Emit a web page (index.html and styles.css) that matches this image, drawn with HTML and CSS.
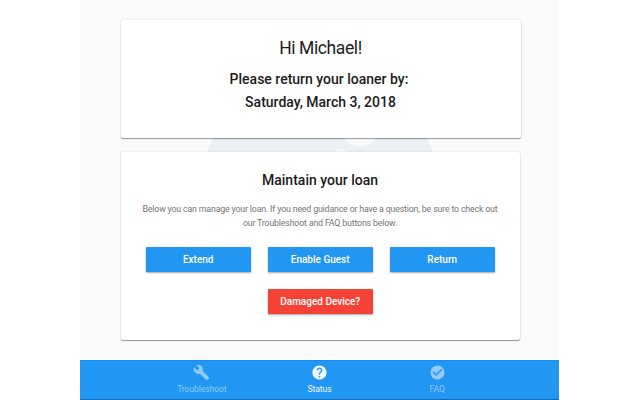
FILE: index.html
```html
<!DOCTYPE html>
<html lang="en">
<head>
<meta charset="utf-8">
<title>Loaner</title>
<link rel="stylesheet" href="styles.css">
</head>
<body>
<div class="app">
  <main class="content">
    <svg class="backdrop" width="240" height="240" viewBox="0 0 240 240">
      <circle cx="120" cy="120" r="119" fill="#eceff4"/>
      <circle cx="160" cy="56" r="20" fill="#fafafa"/>
      <circle cx="140.500" cy="87" r="8" fill="#fafafa"/>
    </svg>
    <section class="card greeting">
      <h1>Hi Michael!</h1>
      <p class="due">Please return your loaner by:</p>
      <p class="due date">Saturday, March 3, 2018</p>
    </section>
    <section class="card manage">
      <h2>Maintain your loan</h2>
      <p class="help">Below you can manage your loan. If you need guidance or have a question, be sure to check out<br>our Troubleshoot and FAQ buttons below.</p>
      <div class="actions">
        <button class="btn">Extend</button>
        <button class="btn">Enable Guest</button>
        <button class="btn">Return</button>
        <button class="btn damaged">Damaged Device?</button>
      </div>
    </section>
  </main>
  <nav class="nav">
    <a class="tab">
      <svg viewBox="0 0 24 24"><path d="M22.700 19l-9.100-9.100c.9-2.300.4-5-1.500-6.900-2-2-5-2.400-7.400-1.300L9 6 6 9 1.600 4.700C.4 7.100.9 10.100 2.900 12.100c1.900 1.900 4.600 2.400 6.900 1.500l9.100 9.100c.4.4 1 .4 1.400 0l2.300-2.300c.5-.4.5-1.100.1-1.400z"/></svg>
      <span>Troubleshoot</span>
    </a>
    <a class="tab active">
      <svg viewBox="0 0 24 24"><path d="M12 2C6.480 2 2 6.480 2 12s4.480 10 10 10 10-4.480 10-10S17.520 2 12 2zm1 17h-2v-2h2v2zm2.070-7.750l-.9.920C13.450 12.900 13 13.500 13 15h-2v-.5c0-1.100.45-2.100 1.170-2.830l1.240-1.260c.37-.36.59-.86.59-1.410 0-1.100-.9-2-2-2s-2 .9-2 2H8c0-2.210 1.790-4 4-4s4 1.790 4 4c0 .88-.36 1.680-.93 2.250z"/></svg>
      <span>Status</span>
    </a>
    <a class="tab">
      <svg viewBox="0 0 24 24"><path d="M12 2C6.480 2 2 6.480 2 12s4.480 10 10 10 10-4.480 10-10S17.520 2 12 2zm-2 15l-5-5 1.410-1.410L10 14.170l7.590-7.590L19 8l-9 9z"/></svg>
      <span>FAQ</span>
    </a>
  </nav>
</div>
</body>
</html>
```

FILE: styles.css
```css
* { box-sizing: border-box; }
body {
  margin: 0;
  background: #fff;
  font-family: Roboto, "Liberation Sans", sans-serif;
  color: #1c1c1c;
}
h1, h2, p { margin: 0; white-space: nowrap; }
.app {
  width: 479px;
  height: 400px;
  margin-left: 80px;
  display: flex;
  flex-direction: column;
  background: #fafafa;
  overflow: hidden;
}
.content {
  position: relative;
  height: 360px;
  padding: 20px 38px 0 41px;
  display: flex;
  flex-direction: column;
  gap: 14px;
}
.backdrop {
  position: absolute;
  left: 120px;
  top: 70px;
}
.card {
  position: relative;
  background: #fff;
  border-radius: 2px;
  text-align: center;
  box-shadow: 0 1px 1px rgba(0, 0, 0, .38), 0 0 2px rgba(0, 0, 0, .16);
}
.greeting { height: 118px; padding-top: 17px; }
.manage { width: 399px; height: 188px; padding-top: 18px; }
h1 {
  font-size: 17.500px;
  font-weight: 400;
  line-height: 22px;
  letter-spacing: -.4px;
  padding-right: 1px;
}
.due {
  font-size: 14px;
  font-weight: 500;
  line-height: 22px;
  padding-right: 4px;
}
.due:not(.date) { margin-top: 9px; }
.date { padding-right: 1px; line-height: 24px; }
h2 {
  font-size: 14px;
  font-weight: 500;
  line-height: 20px;
  padding-right: 1px;
}
.help {
  margin-top: 12px;
  padding-right: 1px;
  font-size: 8.800px;
  letter-spacing: -.17px;
  line-height: 14px;
  color: #757575;
}
.actions {
  margin-top: 17px;
  padding-left: 24.700px;
  display: grid;
  grid-template-columns: repeat(3, 105px);
  gap: 17px;
}
.btn {
  height: 25px;
  padding: 0;
  border: 0;
  border-radius: 1px;
  background: #2196f3;
  color: #fff;
  font: 500 10px/25px Roboto, "Liberation Sans", sans-serif;
  box-shadow: 0 1px 2px rgba(0, 0, 0, .35);
}
.damaged { grid-column: 2; background: #f44336; }
.nav {
  height: 40px;
  padding: 0 63px 0 63px;
  display: flex;
  background: #2196f3;
  border-top: 1px solid #188df0;
  border-bottom: 1px solid #1669ad;
}
.tab {
  flex: 1;
  padding-top: 3px;
  display: flex;
  flex-direction: column;
  align-items: center;
  font-size: 8.600px;
  letter-spacing: -.1px;
  line-height: 16px;
  color: #90caf9;
}
.tab svg { width: 17px; height: 17px; fill: currentColor; }
.active { color: #f2f9ff; }
```
